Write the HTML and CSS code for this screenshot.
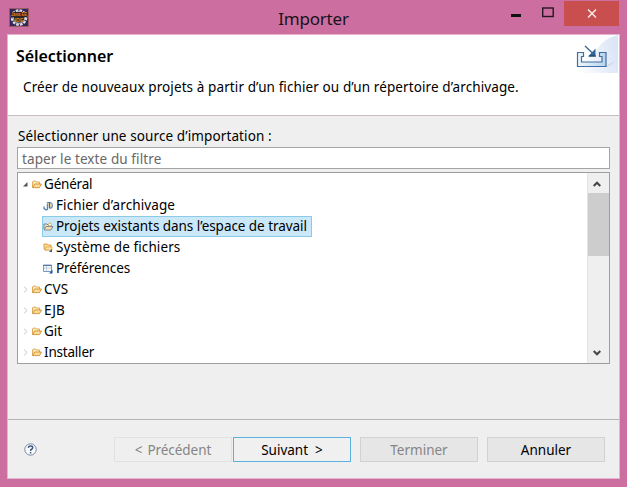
FILE: index.html
```html
<!DOCTYPE html>
<html lang="fr">
<head>
<meta charset="utf-8">
<title>Importer</title>
<link rel="stylesheet" href="styles.css">
</head>
<body>
<svg class="defs" width="0" height="0" aria-hidden="true">
  <symbol id="folder" viewBox="0 0 10 9">
    <path d="M.5 7.5V2L1.5 1H3.5L4.5 2H7.5V4" fill="#fbe9b5" stroke="#d9a24c" stroke-width=".9"/>
    <path d="M.6 7.6 2.7 4H9.5L7.5 7.6Z" fill="#fbdc94" stroke="#ce8e3b" stroke-width=".9"/>
  </symbol>
  <symbol id="closed" viewBox="0 0 5 7"><path d="M.8.5 4 3.5.8 6.5" fill="none" stroke="#c4c4c4" stroke-width=".9"/></symbol>
</svg>
<div class="window">
  <header class="titlebar">
    <svg class="app-icon" width="20" height="19" viewBox="0 0 20 19">
      <rect width="20" height="19" fill="#98595f"/>
      <rect x="1" y="1" width="18" height="17" fill="#33265d"/>
      <circle cx="10" cy="9.5" r="7.2" fill="none" stroke="#dedbe0" stroke-width="2.2" stroke-dasharray="2.7 1.1"/>
      <circle cx="10" cy="9.5" r="5.8" fill="#302326" stroke="#c9c5cb"/>
      <rect x="2" y="4" width="16" height="5" fill="#302326"/>
      <text x="2" y="8.2" class="logo-text" textLength="16" lengthAdjust="spacingAndGlyphs">Java EE</text>
      <text x="5.5" y="14.2" class="logo-text" textLength="9" lengthAdjust="spacingAndGlyphs">IDE</text>
    </svg>
    <h1>Importer</h1>
    <div class="controls">
      <svg class="min" width="10" height="3"><rect width="10" height="3" fill="#111"/></svg>
      <svg class="max" width="12" height="11"><rect x=".7" y="1" width="10.500" height="8.500" fill="none" stroke="#241820" stroke-width="1.4"/></svg>
      <span class="close"><svg width="10" height="9" viewBox="0 0 10 9"><path d="M1 .5 9 8.5M9 .5 1 8.5" stroke="#f7e7e7" stroke-width="1.5"/></svg></span>
    </div>
  </header>
  <main class="dialog">
    <section class="banner">
      <div class="banner-text">
        <h2>Sélectionner</h2>
        <p>Créer de nouveaux projets à partir d’un fichier ou d’un répertoire d’archivage.</p>
      </div>
      <svg class="banner-icon" width="42" height="39" viewBox="0 0 42 39">
        <defs>
          <linearGradient id="glow" x1="0" y1=".7" x2="1" y2=".5"><stop offset="0" stop-color="#fff"/><stop offset="1" stop-color="#dbe5f6"/></linearGradient>
          <linearGradient id="tray" x1="0" y1="0" x2="1" y2="0"><stop offset="0" stop-color="#eef7fb"/><stop offset="1" stop-color="#b9d5ea"/></linearGradient>
        </defs>
        <path d="M0 38V30Q18 20 26 8 33 2 42 0V38Z" fill="url(#glow)"/>
        <path d="M30 31 39 26 36 29 31 32Z" fill="#b9c4d9" opacity=".6"/>
        <path d="M7.500 17.500H1.500V31.500H30V17.500H23.500V21.500H26V27H5.500V21.500H7.500Z" fill="url(#tray)" stroke="#416da6" stroke-width="1.200"/>
        <path d="M9 11 17 18.500" stroke="#3c699c" stroke-width="1.400"/>
        <path d="M19.500 13.500V21.500H12Z" fill="#35659b"/>
        <path d="M13 21H20" stroke="#173958"/>
      </svg>
    </section>
    <section class="content">
      <label>Sélectionner une source d’importation :</label>
      <div class="filter"><span>taper le texte du filtre</span></div>
      <div class="tree">
        <ul>
          <li><svg class="arrow" width="5" height="7" viewBox="0 0 5 7"><path d="M4.500 1V5.500H0Z" fill="#555"/></svg><svg class="folder" width="10" height="9"><use href="#folder"/></svg><span class="t-tight">Général</span></li>
          <li class="child"><svg class="item-icon" width="11" height="10" viewBox="0 0 11 10"><path d="M1 5.500V7.500Q3 9.500 4.500 8.500V1.500" fill="none" stroke="#5f83b5" stroke-width="1.400"/><path d="M4 1.500H7.500Q9.500 2 9.500 4.500T6.500 7.500" fill="#f2dfac" stroke="#7590b5" stroke-width="1.200"/><path d="M6.500 1V7" stroke="#3d6ba5" stroke-width="1.300"/></svg><span class="t-wide">Fichier d’archivage</span></li>
          <li class="child selected"><svg class="item-icon" width="11" height="10" viewBox="0 0 11 10"><path d="M1 7V2H4L5 3H8V5" fill="#f8e4ae" stroke="#6486b3"/><path d="M1 8 3 4.500H10L8 8Z" fill="#f9dda0" stroke="#758eae"/><circle cx="7" cy="2.500" r="1.500" fill="#fff" stroke="#d39b52" stroke-width=".8"/></svg><span class="t-projects">Projets existants dans l’espace de travail</span></li>
          <li class="child"><svg class="item-icon" width="11" height="10" viewBox="0 0 11 10"><path d="M1 6V1H4L5 2H8V7H2Z" fill="#fbd991" stroke="#dda344"/><path d="M2 7 3 4H9V7Z" fill="#ffe4a8" stroke="#d99f43" stroke-width=".7"/><path d="M9 6V9H6Z" fill="#24599c"/></svg><span class="t-wide">Système de fichiers</span></li>
          <li class="child"><svg class="item-icon" width="11" height="10" viewBox="0 0 11 10"><path d="M.5 1H8.500V7.500H.5Z" fill="#f2f7fb" stroke="#8299b6"/><path d="M0 1.500H9" stroke="#587aa6"/><path d="M3.500 2V7M1 4H8" stroke="#bac8d8" stroke-width=".8"/><path d="M9.500 5.500V9.500H6Z" fill="#24599c"/></svg><span class="t-prefs">Préférences</span></li>
          <li><svg class="arrow" width="5" height="7"><use href="#closed"/></svg><svg class="folder" width="10" height="9"><use href="#folder"/></svg><span>CVS</span></li>
          <li><svg class="arrow" width="5" height="7"><use href="#closed"/></svg><svg class="folder" width="10" height="9"><use href="#folder"/></svg><span>EJB</span></li>
          <li><svg class="arrow" width="5" height="7"><use href="#closed"/></svg><svg class="folder" width="10" height="9"><use href="#folder"/></svg><span>Git</span></li>
          <li><svg class="arrow" width="5" height="7"><use href="#closed"/></svg><svg class="folder" width="10" height="9"><use href="#folder"/></svg><span class="t-tight">Installer</span></li>
        </ul>
        <div class="scrollbar">
          <span class="scroll-button"><svg width="8" height="7" viewBox="0 0 8 7"><path d="M.7 5 4 1.700 7.300 5" fill="none" stroke="#454545" stroke-width="2"/></svg></span>
          <span class="thumb"></span>
          <span class="scroll-button down"><svg width="8" height="7" viewBox="0 0 8 7"><path d="M.7 2 4 5.300 7.300 2" fill="none" stroke="#454545" stroke-width="2"/></svg></span>
        </div>
      </div>
    </section>
    <footer>
      <svg class="help" width="13" height="13" viewBox="0 0 13 13"><circle cx="6.500" cy="6.500" r="5.700" fill="#f8fafc" stroke="#6b7e94" stroke-width=".9"/><path d="M4.300 4.800Q4.500 3 6.600 3 8.700 3 8.700 4.700 8.700 5.800 7.500 6.300 6.600 6.700 6.600 7.900M6.600 8.900V10.400" fill="none" stroke="#3e5781" stroke-width="1.500"/></svg>
      <div class="buttons">
        <span class="button previous">&lt;<span class="gap"></span>Précédent</span>
        <span class="button next">Suivant&nbsp; &gt;</span>
        <span class="button finish">Terminer</span>
        <span class="button cancel">Annuler</span>
      </div>
    </footer>
  </main>
</div>
</body>
</html>
```
FILE: styles.css
```css
* { box-sizing: border-box; }
body { margin: 0; font: 13.5px/21px "Noto Sans", "Open Sans", sans-serif; color: #000; background: #cd6ea0; }
.defs { display: block; }
svg { display: block; flex: none; }
h1, h2, p, ul { margin: 0; padding: 0; font-weight: 400; }
.window { width: 627px; height: 487px; padding: 0 7px 8px; background: #cd6ea0; }
.titlebar { height: 34px; display: grid; grid-template-columns: 200px 1fr 200px; }
.app-icon { margin: 8px 0 0 2px; }
.logo-text { font: bold 5px "Liberation Sans", sans-serif; fill: #f17f1b; }
h1 { text-align: center; font-size: 17px; line-height: 25px; padding-top: 6px; letter-spacing: -.2px; color: #19121a; }
.controls { display: flex; justify-content: flex-end; align-items: flex-start; }
.min { margin: 14px 21px 0 0; }
.max { margin: 7px 10px 0 0; }
.close { width: 55px; height: 25px; margin: 1px 1px 0 0; display: flex; align-items: center; justify-content: center; background: #c84f4d; }
.dialog { height: 445px; background: #efefef; border: 1px solid #e6b3cf; display: flex; flex-direction: column; }
.banner { height: 81px; background: #fff; border-bottom: 1px solid #c9bec4; display: flex; justify-content: space-between; }
.banner-text { padding: 11px 0 0 8px; white-space: nowrap; }
h2 { font-size: 16px; font-weight: 600; line-height: 20px; letter-spacing: -.05px; }
.banner-text p { padding: 11px 0 0 7px; letter-spacing: .1px; }
.banner-icon { margin: 0 1px 0 0; }
.content { height: 304px; padding: 10px 9px 0 9px; border-bottom: 1px solid #b5b5b5; display: flex; flex-direction: column; }
label { height: 21px; padding-left: 1px; letter-spacing: .11px; }
.filter { height: 22px; background: #fff; border: 1px solid #a4a4a4; padding-left: 4px; line-height: 23px; letter-spacing: .1px; color: #686868; }
.tree { height: 192px; margin-top: 3px; border: 1px solid #9e9e9e; background: #fff; display: flex; justify-content: space-between; }
ul { list-style: none; padding-top: 1px; }
li { height: 21px; display: flex; align-items: center; padding-left: 5px; white-space: nowrap; }
li .arrow { margin-right: 4px; }
li .folder { margin-right: 2px; }
.t-tight { letter-spacing: -.2px; }
.t-wide { letter-spacing: .1px; }
.t-projects { letter-spacing: -.05px; }
.t-prefs { letter-spacing: -.1px; }
li.child { margin-left: 24px; padding-left: 1px; }
.item-icon { margin-right: 2px; }
li.selected { width: 270px; background: #cbe8f9; border: 1px solid #8acbe7; padding-left: 0; }
.scrollbar { width: 22px; background: #efefef; display: flex; flex-direction: column; border-left: 1px solid #e4e4e4; }
.scroll-button { height: 20px; display: flex; align-items: center; padding: 3px 0 0 5px; }
.thumb { height: 63px; background: #cdcdcd; }
.down { margin-top: auto; padding: 0 0 2px 5px; }
footer { flex: 1; display: flex; justify-content: space-between; padding: 17px 14px 0 16px; }
.help { margin-top: 6px; }
.buttons { display: flex; height: 26px; }
.button { width: 118px; height: 25px; margin-right: 9px; border: 1px solid #d2d2d2; background: #e6e6e6; text-align: center; line-height: 25px; }
.previous { margin-right: 1px; letter-spacing: -.05px; color: #858585; background: #efefef; border-color: #e2e2e2; }
.gap { display: inline-block; width: 5px; }
.next { border-color: #5bb2df; background: #f0f0f0; }
.finish { color: #858585; }
.cancel { margin-right: 0; }
```
